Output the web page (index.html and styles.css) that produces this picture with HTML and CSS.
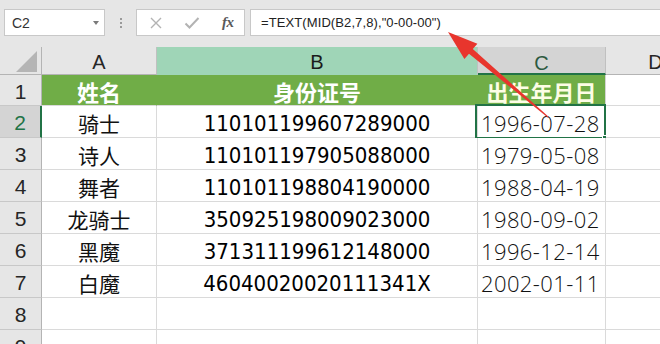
FILE: index.html
```html
<!DOCTYPE html>
<html lang="zh-CN">
<head>
<meta charset="utf-8">
<link rel="stylesheet" href="styles.css">
</head>
<body>
<div class="app">
  <div class="toolbar">
    <div class="namebox"><span class="ref">C2</span><span class="caret"></span></div>
    <div class="grip"><i></i><i></i><i></i></div>
    <div class="fbtns">
      <svg class="ico" width="14" height="14" viewBox="0 0 14 14"><path d="M2 2 L12 12 M12 2 L2 12" stroke="#b3b3b3" stroke-width="1.4" fill="none"/></svg>
      <svg class="ico" width="16" height="14" viewBox="0 0 16 14"><path d="M1.5 7.5 L5.5 11.5 L14.5 2" stroke="#b3b3b3" stroke-width="2" fill="none"/></svg>
      <span class="fx">fx</span>
    </div>
    <div class="formula">=TEXT(MID(B2,7,8),"0-00-00")</div>
  </div>

  <div class="sheet">
    <div class="corner"><svg width="22" height="21" viewBox="0 0 22 21"><polygon points="21,0 21,21 0,21" fill="#b5b5b5"/></svg></div>
    <div class="ch">A</div>
    <div class="ch ch-b">B</div>
    <div class="ch ch-c">C</div>
    <div class="ch ch-d">D</div>

    <div class="rh">1</div>
    <div class="c hd">姓名</div>
    <div class="c hd">身份证号</div>
    <div class="c hd hd-c">出生年月日</div>
    <div class="c"></div>

    <div class="rh rh-sel">2</div>
    <div class="c name">骑士</div>
    <div class="c id">110101199607289000</div>
    <div class="c date sel">1996-07-28<span class="box"><span class="handle"></span></span></div>
    <div class="c"></div>

    <div class="rh">3</div>
    <div class="c name">诗人</div>
    <div class="c id">110101197905088000</div>
    <div class="c date">1979-05-08</div>
    <div class="c"></div>

    <div class="rh">4</div>
    <div class="c name">舞者</div>
    <div class="c id">110101198804190000</div>
    <div class="c date">1988-04-19</div>
    <div class="c"></div>

    <div class="rh">5</div>
    <div class="c name">龙骑士</div>
    <div class="c id">350925198009023000</div>
    <div class="c date">1980-09-02</div>
    <div class="c"></div>

    <div class="rh">6</div>
    <div class="c name">黑魔</div>
    <div class="c id">371311199612148000</div>
    <div class="c date">1996-12-14</div>
    <div class="c"></div>

    <div class="rh">7</div>
    <div class="c name">白魔</div>
    <div class="c id">46040020020111341X</div>
    <div class="c date">2002-01-11</div>
    <div class="c"></div>

    <div class="rh">8</div>
    <div class="c"></div>
    <div class="c"></div>
    <div class="c"></div>
    <div class="c"></div>

    <div class="rh">9</div>
    <div class="c"></div>
    <div class="c"></div>
    <div class="c"></div>
    <div class="c"></div>
  </div>

  <svg class="arrow" width="660" height="344" viewBox="0 0 660 344">
    <polygon points="448,32 477.4,43.8 472.8,49.1 548.3,116.6 547.7,117.4 469,53.7 464.4,59" fill="#e8352d"/>
  </svg>
</div>
</body>
</html>
```

FILE: styles.css
```css
* { box-sizing: border-box; }
html, body { margin: 0; padding: 0; }
body {
  width: 660px;
  height: 344px;
  overflow: hidden;
  background: #ffffff;
  font-family: "Liberation Sans", "Noto Sans CJK SC", sans-serif;
}
.app {
  position: relative;
  width: 660px;
  height: 344px;
  overflow: hidden;
}

/* ---------- toolbar ---------- */
.toolbar {
  height: 47px;
  background: #e6e6e6;
  display: flex;
  align-items: flex-start;
  padding: 9px 0 0 4px;
}
.namebox {
  width: 101px;
  height: 27px;
  background: #fff;
  border: 1px solid #c8c8c8;
  display: flex;
  align-items: center;
  justify-content: space-between;
  padding: 0 5px 0 7px;
}
.ref {
  font-size: 14px;
  color: #333;
}
.caret {
  width: 0;
  height: 0;
  border-left: 3.5px solid transparent;
  border-right: 3.5px solid transparent;
  border-top: 4px solid #7a7a7a;
}
.grip {
  width: 31px;
  height: 27px;
  display: flex;
  flex-direction: column;
  align-items: center;
  justify-content: center;
  gap: 2px;
}
.grip i {
  display: block;
  width: 2px;
  height: 2px;
  background: #9a9a9a;
}
.fbtns {
  width: 109px;
  height: 27px;
  background: #fff;
  border: 1px solid #c8c8c8;
  display: flex;
  align-items: center;
  padding-left: 12px;
}
.fbtns .ico { display: block; }
.fbtns .ico + .ico { margin-left: 21px; }
.fx {
  margin-left: 22px;
  font-family: "Liberation Serif", serif;
  font-style: italic;
  font-weight: bold;
  font-size: 15px;
  color: #5a5a5a;
  letter-spacing: -0.5px;
}
.formula {
  margin-left: 5px;
  flex: 1;
  height: 27px;
  background: #fff;
  border: 1px solid #c8c8c8;
  border-right: none;
  font-size: 13px;
  letter-spacing: 0.1px;
  color: #222;
  display: flex;
  align-items: center;
  padding-left: 10px;
}

/* ---------- sheet ---------- */
.sheet {
  display: grid;
  grid-template-columns: 42px 115px 321px 128px 100px;
  grid-template-rows: 28px 31px repeat(8, 32px);
}
.sheet > div {
  border-right: 1px solid #dadada;
  border-bottom: 1px solid #dadada;
  display: flex;
  align-items: center;
  justify-content: center;
  white-space: nowrap;
}
.corner {
  background: #e6e6e6;
  border-right-color: #b4b4b4 !important;
  border-bottom-color: #b4b4b4 !important;
  justify-content: flex-end !important;
  align-items: flex-end !important;
  padding: 0 3px 2px 0;
}
.corner svg { display: block; }
.ch {
  background: #e6e6e6;
  border-right-color: #c0c0c0 !important;
  border-bottom-color: #b4b4b4 !important;
  font-size: 20px;
  color: #262626;
  padding-top: 4px;
}
.ch-b {
  background: #9fd5b7;
  border-bottom-color: #9fd5b7 !important;
  color: #1b1b1b;
}
.ch-c {
  background: #d4d4d4;
  border-bottom: 2px solid #217346 !important;
  color: #2c5a40;
  padding-top: 6px;
}
.ch-d {
  justify-content: center;
}
.rh {
  background: #e6e6e6;
  border-right-color: #b4b4b4 !important;
  border-bottom-color: #c8c8c8 !important;
  font-size: 21px;
  color: #262626;
  padding-top: 3px;
}
.rh-sel {
  background: #d4d4d4;
  border-right: 2px solid #217346 !important;
  color: #217346;
}
.c {
  background: #fff;
  position: relative;
}
.hd {
  background: #70ad47;
  border-right-color: #70ad47 !important;
  font-family: "Noto Sans CJK SC", sans-serif;
  font-weight: bold;
  font-size: 22px;
  color: #ffffff;
  padding-top: 2px;
}
.hd-c {
  color: #fdfde6;
  border-right-color: #d4d4d4 !important;
}
.name {
  font-family: "Noto Sans CJK SC", sans-serif;
  font-size: 21px;
  color: #111;
  padding-top: 2px;
}
.id {
  font-family: "DejaVu Sans Condensed", "DejaVu Sans", sans-serif;
  font-stretch: condensed;
  font-size: 22px;
  color: #000;
  padding-top: 3px;
}
.date {
  justify-content: flex-start !important;
  padding-left: 3px;
  padding-top: 3px;
  font-family: "Open Sans", sans-serif;
  font-weight: 300;
  font-size: 22px;
  letter-spacing: 0.4px;
  color: #111;
}
.box {
  position: absolute;
  left: -3px;
  top: -2px;
  width: 131px;
  height: 35px;
  border: 2px solid #217346;
}
.handle {
  position: absolute;
  right: -5px;
  bottom: -5px;
  width: 7px;
  height: 7px;
  background: #217346;
  border: 1px solid #fff;
}

/* ---------- annotation ---------- */
.arrow {
  position: absolute;
  left: 0;
  top: 0;
  pointer-events: none;
}
```
